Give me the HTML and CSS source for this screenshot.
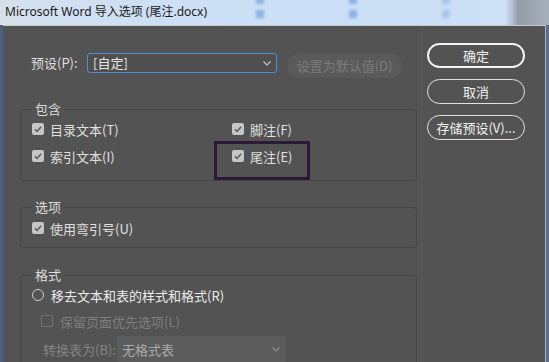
FILE: index.html
```html
<!DOCTYPE html>
<html lang="zh-CN">
<head>
<meta charset="utf-8">
<title>Microsoft Word 导入选项</title>
<link rel="stylesheet" href="styles.css">
</head>
<body>
<div class="screen">
  <div class="titlebar">
    <span class="glass g1"></span><span class="glass g2"></span><span class="glass g3"></span>
    <span class="glass g4"></span><span class="glass g5"></span><span class="glass g6"></span>
    <span class="title">Microsoft Word 导入选项 (尾注.docx)</span>
  </div>
  <div class="frame">
    <div class="edge-left"></div>
    <div class="dialog">
      <div class="main">
        <div class="preset-row">
          <span class="preset-label">预设(P):</span>
          <div class="select select-active">
            <span>[自定]</span>
            <svg class="chev" width="8" height="5" viewBox="0 0 8 5"><polyline points="0.5,0.5 4,4 7.5,0.5" fill="none" stroke="#c8c8c8" stroke-width="1.1"/></svg>
          </div>
          <button class="btn-disabled">设置为默认值(D)</button>
        </div>

        <fieldset class="group group-include">
          <legend>包含</legend>
          <div class="grid2">
            <label class="check"><svg class="cb" width="12" height="12" viewBox="0 0 12 12"><rect x="0" y="0" width="12" height="12" rx="2" fill="#c6c6c6"/><polyline points="3,6.3 5.1,8.4 9.1,3.8" fill="none" stroke="#5c5c5c" stroke-width="1.6"/></svg>目录文本(T)</label>
            <label class="check"><svg class="cb" width="12" height="12" viewBox="0 0 12 12"><rect x="0" y="0" width="12" height="12" rx="2" fill="#c6c6c6"/><polyline points="3,6.3 5.1,8.4 9.1,3.8" fill="none" stroke="#5c5c5c" stroke-width="1.6"/></svg>脚注(F)</label>
            <label class="check"><svg class="cb" width="12" height="12" viewBox="0 0 12 12"><rect x="0" y="0" width="12" height="12" rx="2" fill="#c6c6c6"/><polyline points="3,6.3 5.1,8.4 9.1,3.8" fill="none" stroke="#5c5c5c" stroke-width="1.6"/></svg>索引文本(I)</label>
            <label class="check marked"><svg class="cb" width="12" height="12" viewBox="0 0 12 12"><rect x="0" y="0" width="12" height="12" rx="2" fill="#c6c6c6"/><polyline points="3,6.3 5.1,8.4 9.1,3.8" fill="none" stroke="#5c5c5c" stroke-width="1.6"/></svg>尾注(E)</label>
          </div>
        </fieldset>

        <fieldset class="group group-options">
          <legend>选项</legend>
          <label class="check"><svg class="cb" width="12" height="12" viewBox="0 0 12 12"><rect x="0" y="0" width="12" height="12" rx="2" fill="#c6c6c6"/><polyline points="3,6.3 5.1,8.4 9.1,3.8" fill="none" stroke="#5c5c5c" stroke-width="1.6"/></svg>使用弯引号(U)</label>
        </fieldset>

        <fieldset class="group group-format">
          <legend>格式</legend>
          <label class="radio"><span class="radio-dot"></span>移去文本和表的样式和格式(R)</label>
          <label class="check check-disabled"><span class="cb-empty"></span>保留页面优先选项(L)</label>
          <div class="convert-row">
            <span class="convert-label">转换表为(B):</span>
            <div class="select select-disabled">
              <span>无格式表</span>
              <svg class="chev" width="8" height="5" viewBox="0 0 8 5"><polyline points="0.5,0.5 4,4 7.5,0.5" fill="none" stroke="#8c8c8c" stroke-width="1.1"/></svg>
            </div>
          </div>
        </fieldset>
      </div>
      <div class="side">
        <button class="btn btn-default">确定</button>
        <button class="btn">取消</button>
        <button class="btn">存储预设(V)...</button>
      </div>
    </div>
    <div class="edge-right"></div>
  </div>
</div>
</body>
</html>
```

FILE: styles.css
```css
* { box-sizing: border-box; }
html, body { margin: 0; padding: 0; }
body {
  width: 549px;
  height: 362px;
  overflow: hidden;
  font-family: "Noto Sans CJK SC", "Noto Sans", sans-serif;
  font-size: 13px;
  background: #535353;
}
.screen { width: 549px; height: 362px; display: flex; flex-direction: column; overflow: hidden; }

.titlebar {
  position: relative;
  height: 25px;
  flex: none;
  display: flex;
  align-items: center;
  padding-left: 5px;
  background: linear-gradient(90deg, #d8dfe7 0, #d0e0f1 45px, #cadff6 300px, #cde0f4 505px, #b3c2d3 512px, #939ca8 518px, #a6afb9 549px);
  overflow: hidden;
}
.glass {
  position: absolute;
  width: 8px;
  height: 8px;
  background: #7aa8e0;
  filter: blur(1.5px);
  opacity: 0.8;
}
.g1 { left: 256px; top: -4px; }
.g2 { left: 256px; top: 10px; }
.g3 { left: 349px; top: -4px; }
.g4 { left: 349px; top: 10px; }
.g5 { left: 442px; top: -4px; opacity: 0.45; }
.g6 { left: 442px; top: 10px; opacity: 0.45; }
.title {
  position: relative;
  font-family: "Noto Sans", "Noto Sans CJK SC", sans-serif;
  font-size: 12px;
  color: #1a1a1a;
  line-height: 16px;
  margin-top: -1px;
}

.frame { flex: 1; display: flex; min-height: 0; overflow: hidden; }
.edge-left { width: 3px; background: #485f82; flex: none; }
.edge-right { width: 4px; flex: none; background: #5a6d8c; border-left: 1px solid #aab2bb; }
.dialog {
  flex: 1;
  display: flex;
  background: #535353;
  border-top: 1px solid #c3cad2;
}

.main {
  width: 419px;
  flex: none;
  padding: 27px 0 0 17px;
  border-right: 1px solid #595959;
}

.preset-row { display: flex; align-items: flex-start; height: 25px; }
.preset-label {
  color: #dedede;
  line-height: 20px;
  margin-left: 11px;
  width: 56px;
}
.select {
  display: flex;
  align-items: center;
  justify-content: space-between;
  border-radius: 3px;
}
.select-active {
  width: 190px;
  height: 20px;
  border: 1px solid #4d8fd4;
  background: #4f4f4f;
  color: #e6e6e6;
  padding: 0 5px 0 5px;
  line-height: 18px;
}
.chev { flex: none; }
.btn-disabled {
  margin-left: 10px;
  width: 115px;
  height: 25px;
  border: none;
  border-radius: 13px;
  background: #5a5a5a;
  color: #7b7b7b;
  font-family: inherit;
  font-size: 13px;
  padding: 0;
}

.group {
  margin: 0;
  width: 397px;
  border: 1px solid #464646;
  border-radius: 3px;
  padding: 0 0 0 11px;
}
.group legend {
  padding: 0 3px;
  color: #dcdcdc;
  line-height: 16px;
  font-size: 13px;
}
.group-include { margin-top: 23px; padding-top: 2px; padding-bottom: 14px; }
.group-options { margin-top: 18px; padding-top: 3px; padding-bottom: 9px; }
.group-format { margin-top: 19px; padding-top: 2px; height: 100px; }

.grid2 {
  display: grid;
  grid-template-columns: 200px 1fr;
  row-gap: 7px;
}
.check, .radio {
  display: flex;
  align-items: center;
  height: 20px;
  color: #e0e0e0;
  white-space: nowrap;
}
.cb { flex: none; margin-right: 6px; }
.marked { position: relative; justify-self: start; }
.marked::after {
  content: "";
  position: absolute;
  left: -18px;
  top: -5px;
  width: 90px;
  height: 33px;
  border: 3px solid #2c1838;
}

.radio { color: #ececec; }
.radio-dot {
  width: 12px;
  height: 12px;
  border: 1.5px solid #cfcfcf;
  border-radius: 50%;
  margin-right: 7px;
  flex: none;
}
.check-disabled { margin-top: 6px; margin-left: 9px; color: #7e7e7e; }
.cb-empty {
  width: 12px;
  height: 12px;
  border: 1px solid #717171;
  border-radius: 1px;
  margin-right: 7px;
  flex: none;
}
.convert-row { display: flex; align-items: center; margin-top: 5px; margin-left: 11px; }
.convert-label { width: 74px; color: #848484; }
.select-disabled {
  width: 169px;
  height: 26px;
  background: #5c5c5c;
  color: #ababab;
  padding: 0 6px 0 5px;
  border-radius: 2px;
}

.side {
  margin-left: 5px;
  padding-top: 17px;
  display: flex;
  flex-direction: column;
  gap: 11px;
}
.btn {
  width: 98px;
  height: 25px;
  border: 1px solid #e2e2e2;
  border-radius: 13px;
  background: transparent;
  color: #f0f0f0;
  font-family: inherit;
  font-size: 13px;
  padding: 0;
}
.btn-default { border: 2px solid #f4f4f4; }
```
